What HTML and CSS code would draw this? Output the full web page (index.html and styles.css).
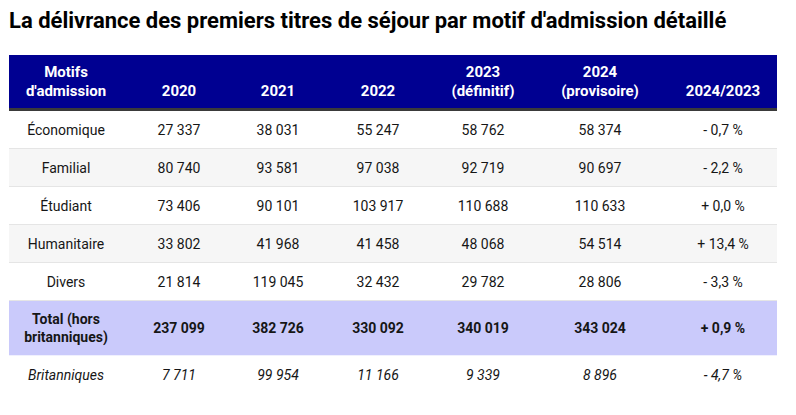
FILE: index.html
```html
<!DOCTYPE html>
<html lang="fr">
<head>
<meta charset="utf-8">
<link rel="stylesheet" href="styles.css">
</head>
<body>
<h1 class="title">La délivrance des premiers titres de séjour par motif d'admission détaillé</h1>
<table class="data">
  <colgroup>
    <col class="c1"><col class="c2"><col class="c3"><col class="c4"><col class="c5"><col class="c6"><col class="c7">
  </colgroup>
  <thead>
    <tr>
      <th>Motifs<br>d'admission</th>
      <th>2020</th>
      <th>2021</th>
      <th>2022</th>
      <th>2023<br>(définitif)</th>
      <th>2024<br>(provisoire)</th>
      <th>2024/2023</th>
    </tr>
  </thead>
  <tbody>
    <tr><td>Économique</td><td>27 337</td><td>38 031</td><td>55 247</td><td>58 762</td><td>58 374</td><td>- 0,7 %</td></tr>
    <tr class="alt"><td>Familial</td><td>80 740</td><td>93 581</td><td>97 038</td><td>92 719</td><td>90 697</td><td>- 2,2 %</td></tr>
    <tr><td>Étudiant</td><td>73 406</td><td>90 101</td><td>103 917</td><td>110 688</td><td>110 633</td><td>+ 0,0 %</td></tr>
    <tr class="alt"><td>Humanitaire</td><td>33 802</td><td>41 968</td><td>41 458</td><td>48 068</td><td>54 514</td><td>+ 13,4 %</td></tr>
    <tr><td>Divers</td><td>21 814</td><td>119 045</td><td>32 432</td><td>29 782</td><td>28 806</td><td>- 3,3 %</td></tr>
    <tr class="total"><td>Total (hors<br>britanniques)</td><td>237 099</td><td>382 726</td><td>330 092</td><td>340 019</td><td>343 024</td><td>+ 0,9 %</td></tr>
    <tr class="brit"><td>Britanniques</td><td>7 711</td><td>99 954</td><td>11 166</td><td>9 339</td><td>8 896</td><td>- 4,7 %</td></tr>
  </tbody>
</table>
</body>
</html>
```
FILE: styles.css
```css
html, body {
  margin: 0;
  padding: 0;
  background: #ffffff;
}
body {
  padding: 0 9px;
  font-family: Roboto, "Liberation Sans", Arial, sans-serif;
  color: #161616;
}
.title {
  margin: 0;
  padding-top: 7px;
  font-size: 22px;
  line-height: 28px;
  font-weight: 700;
  color: #000000;
}
.data {
  margin-top: 20px;
  width: 768px;
  border-collapse: collapse;
  table-layout: fixed;
  font-size: 14px;
}
.c1 { width: 114px; }
.c2 { width: 112px; }
.c3 { width: 86px; }
.c4 { width: 114px; }
.c5 { width: 96px; }
.c6 { width: 138px; }
.c7 { width: 108px; }
.data thead th {
  background: #000091;
  color: #ffffff;
  font-weight: 700;
  font-size: 15px;
  line-height: 19px;
  text-align: center;
  vertical-align: bottom;
  padding: 8px 4px 7px;
  border-bottom: 3px solid #3a3a3a;
}
.data td {
  text-align: center;
  vertical-align: middle;
  height: 37px;
  padding: 0 4px;
  line-height: 18px;
  border-bottom: 1px solid #e5e5e5;
}
.data tr.alt td {
  background: #f6f6f6;
}
.data tr.total td {
  background: #cacafb;
  font-weight: 700;
  height: 54px;
  border-bottom: 1px solid #f0f0fe;
}
.data tr.brit td {
  font-style: italic;
  border-bottom: none;
}
```
